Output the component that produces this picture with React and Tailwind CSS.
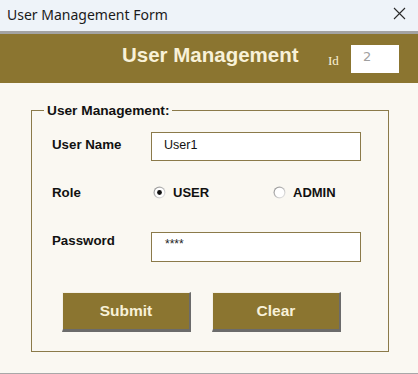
function Radio({ checked }) {
  return (
    <svg width="13" height="13" viewBox="0 0 13 13" className="shrink-0">
      <defs>
        <linearGradient id={checked ? "rg1" : "rg2"} x1="0" y1="0" x2="1" y2="1">
          <stop offset="0" stopColor="#8a8a8a" />
          <stop offset="1" stopColor="#f2f2f2" />
        </linearGradient>
      </defs>
      <circle cx="6.5" cy="6.5" r="6" fill={`url(#${checked ? "rg1" : "rg2"})`} />
      <circle cx="6.5" cy="6.5" r="4.8" fill="#ffffff" />
      {checked && <circle cx="6.5" cy="6.5" r="2.4" fill="#111111" />}
    </svg>
  );
}

function Button({ children }) {
  return (
    <button className="w-[129px] h-[40px] bg-[#8b7530] border-t border-l border-t-[#f4f1e8] border-l-[#f4f1e8] border-r-2 border-b-[3px] border-r-[#6b6b6b] border-b-[#6b6b6b] text-[#f8f1d8] text-[15.5px] font-bold">
      {children}
    </button>
  );
}

export default function App() {
  return (
    <div className="w-[418px] h-[374px] bg-[#faf8f2] flex flex-col border-b border-[#a8a8a8]" style={{ fontFamily: '"Liberation Sans", Arial, sans-serif' }}>
      <div className="h-[34px] shrink-0 bg-[#eef3f9] border-b-[3px] border-[#a3a3a3] flex items-start justify-between pl-[7px] pr-[12px]">
        <span className="mt-[4px] text-[14px] text-[#1a1a1a]" style={{ fontFamily: '"Noto Sans", sans-serif' }}>User Management Form</span>
        <svg width="13" height="13" viewBox="0 0 13 13" className="mt-[7px]">
          <path d="M1 1 L12 12 M12 1 L1 12" stroke="#2a2a2a" strokeWidth="1.1" />
        </svg>
      </div>

      <div className="h-[49px] shrink-0 bg-[#8b7530] flex items-start pl-[122px]">
        <span className="w-[206px] mt-[9px] text-[20.5px] leading-[23px] font-bold text-[#f8f1d8]">User Management</span>
        <span className="w-[23px] mt-[19px] text-[13px] leading-[15px] text-[#f8f1d8]" style={{ fontFamily: '"Liberation Serif", serif' }}>Id</span>
        <div className="mt-[11px] w-[48px] h-[28px] bg-white pl-[12px] pt-[4px] text-[13px] leading-[15px] text-[#a0a0a0]" style={{ fontFamily: '"DejaVu Sans", sans-serif' }}>2</div>
      </div>

      <div className="pl-[31px] pt-[20px]">
        <fieldset className="w-[358px] h-[249px] border border-[#8b7a4a] px-0 pb-[20px]">
          <legend className="ml-[12px] px-[3px] text-[13.7px] leading-[15px] font-bold text-[#111]">User Management:</legend>

          <div className="flex items-start pl-[20px] mt-[14px]">
            <span className="w-[99px] pt-[5px] text-[13.3px] leading-[15px] font-bold text-[#111]">User Name</span>
            <div className="w-[210px] h-[29px] bg-white border border-[#8b7a4a] pl-[12px] pt-[5px] text-[12.5px] leading-[15px] text-[#111]">User1</div>
          </div>

          <div className="flex items-center pl-[20px] mt-[24px] h-[15px]">
            <span className="w-[101px] text-[13.3px] leading-[15px] font-bold text-[#111]">Role</span>
            <div className="flex items-center gap-[7px] w-[120px]">
              <Radio checked />
              <span className="text-[13px] leading-[15px] font-bold text-[#111]">USER</span>
            </div>
            <div className="flex items-center gap-[7px]">
              <Radio />
              <span className="text-[13px] leading-[15px] font-bold text-[#111]">ADMIN</span>
            </div>
          </div>

          <div className="flex items-start pl-[20px] mt-[32px]">
            <span className="w-[99px] pt-[1px] text-[13.3px] leading-[15px] font-bold text-[#111]">Password</span>
            <div className="w-[210px] h-[30px] bg-white border border-[#8b7a4a] pl-[13px] pt-[4px] text-[12px] leading-[15px] text-[#222]">****</div>
          </div>

          <div className="flex gap-[21px] pl-[30px] mt-[30px]">
            <Button>Submit</Button>
            <Button>Clear</Button>
          </div>
        </fieldset>
      </div>
    </div>
  );
}
